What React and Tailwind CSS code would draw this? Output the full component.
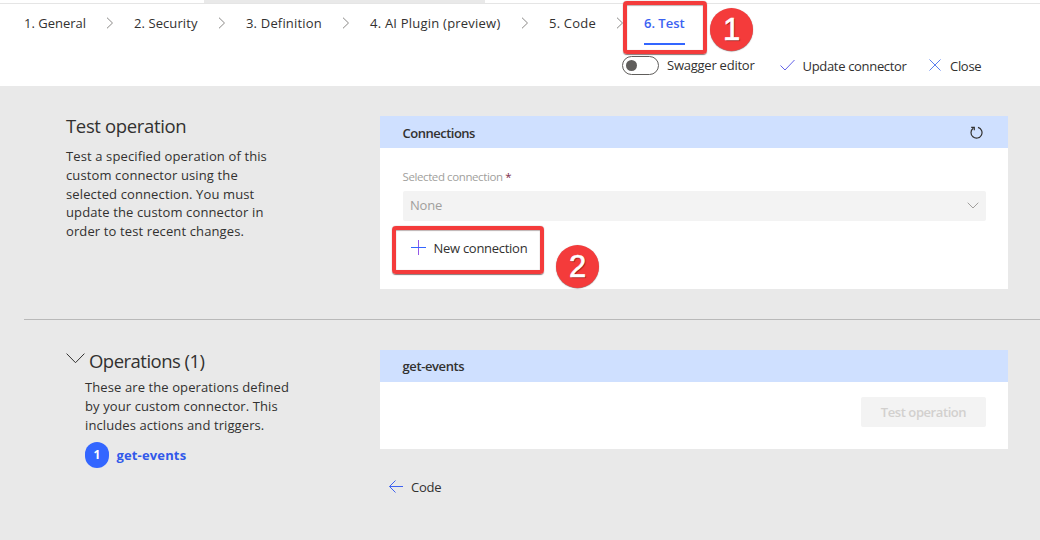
import React from "react";

const steps = [
  { label: "1. General", width: "w-[62px] tracking-[0px]" },
  { label: "2. Security", width: "w-[64px] tracking-[0.08px]" },
  { label: "3. Definition", width: "w-[76px] tracking-[0.18px]" },
  { label: "4. AI Plugin (preview)", width: "w-[131px] tracking-[0.22px]" },
  { label: "5. Code", width: "w-[47px] tracking-[0.2px]" },
];

function Glyph({ d, w, h, className = "", stroke = 1 }) {
  return (
    <svg width={w} height={h} viewBox={`0 0 ${w} ${h}`} fill="none" stroke="currentColor" strokeWidth={stroke} className={`block shrink-0 ${className}`}>
      <path d={d} />
    </svg>
  );
}

function Callout({ number, className }) {
  return (
    <div className={`absolute flex size-[43px] items-center justify-center rounded-full bg-[#f43b3b] font-['Liberation_Sans',sans-serif] text-[31px] leading-none font-normal text-white shadow-[0_0.5px_1px_0_rgba(90,60,60,0.7)] [-webkit-text-stroke:0.6px_white] [text-shadow:1px_1px_1px_rgba(80,0,0,0.6)] ${className}`}>
      {number}
    </div>
  );
}

function Highlight({ className }) {
  return <div className={`absolute rounded-[4px] border-[4px] border-[#f43b3b] shadow-[0_0.5px_1px_0_rgba(90,60,60,0.7),inset_0_0.5px_1px_0_rgba(90,60,60,0.7)] ${className}`} />;
}

export default function App() {
  return (
    <div className="relative flex h-[540px] w-[1040px] flex-col overflow-hidden bg-[#e9e9e9] font-['Open_Sans','Noto_Sans',sans-serif] text-[13px] text-[#323130]">
      <header className="flex h-[86px] shrink-0 flex-col bg-white">
        <div className="flex h-1 shrink-0 border-b border-[#e5e5e5] pl-[204px]">
          <div className="h-[3px] w-[281px] bg-[#e9e9e9]" />
        </div>
        <nav className="flex h-[42px] shrink-0 pl-6 leading-[38px]">
          {steps.map((s) => (
            <React.Fragment key={s.label}>
              <span className={`${s.width} shrink-0 whitespace-nowrap`}>{s.label}</span>
              <span className="flex w-12 shrink-0 justify-center pt-[13px]">
                <Glyph w={8} h={12} d="M1 .7 6.5 6 1 11.3" className="text-[#8a8886]" />
              </span>
            </React.Fragment>
          ))}
          <span className="h-[41px] w-[41px] shrink-0 border-b-2 border-[#3366ff] font-semibold whitespace-nowrap text-[#3b62f2]">6. Test</span>
        </nav>
        <div className="flex h-10 items-center pb-1 pl-[622px]">
          <span className="mt-[3px] flex h-[19px] w-[37px] items-center rounded-full border border-[#605e5c] pl-[3px]">
            <span className="size-[11px] rounded-full bg-[#605e5c]" />
          </span>
          <span className="mt-[3px] ml-2 w-[88px] whitespace-nowrap tracking-[-0.24px]">Swagger editor</span>
          <Glyph w={15} h={12} d="M.5 6.5 5 11 14.5 1" className="mt-[2px] ml-[25px] text-[#6262e8]" />
          <span className="mt-[5px] ml-[7.5px] w-[105.5px] whitespace-nowrap tracking-[-0.32px]">Update connector</span>
          <Glyph w={12} h={12} d="M.5.5 11.5 11.5M11.5.5.5 11.5" className="mt-[2px] ml-[21px] text-[#5d80ee]" />
          <span className="mt-[5px] ml-[9px] tracking-[-0.3px]">Close</span>
        </div>
      </header>

      <section className="flex h-[233px] shrink-0 pt-[30px] pl-[66px]">
        <div className="w-[314px] shrink-0">
          <h2 className="-mt-px text-[18.5px] leading-[22px] tracking-[-0.35px]">Test operation</h2>
          <p className="mt-[10px] leading-[18.75px] tracking-[0.12px] whitespace-nowrap">
            Test a specified operation of this<br />custom connector using the<br />selected connection. You must<br />update the custom connector in<br />order to test recent changes.
          </p>
        </div>
        <div className="h-[173px] w-[628px] bg-white">
          <div className="flex h-8 items-center justify-between bg-[#cfe0ff] pr-[25px] pl-[22.5px]">
            <span className="pt-[3px] text-[13px] font-semibold tracking-[-0.5px]">Connections</span>
            <Glyph w={13} h={13} stroke={1.2} d="M8 1.3A5.5 5.5 0 1 1 3.2 2.2M1.2 1.3H4.3V4.2" />
          </div>
          <div className="flex flex-col pt-[21px] pr-[22px] pl-[23px]">
            <div className="-ml-[0.5px] h-[22px] text-[11.5px] leading-4 text-[#a19f9d]"><span className="tracking-[-0.4px]">Selected connection </span><span className="text-[#7d2a48]">*</span></div>
            <div className="flex h-[30px] items-center justify-between rounded-[2px] bg-[#f3f3f3] pr-[7px] pl-[7px] text-[#a19f9d]">
              <span className="tracking-[-0.2px]">None</span>
              <Glyph w={12} h={7} d="M.7.7 6 6 11.3.7" className="-mt-[2px]" />
            </div>
            <div className="mt-[15px] flex h-6 items-center pl-2">
              <svg width="15" height="15" viewBox="0 0 15 15" className="mt-[-1px] block shrink-0" fill="none">
                <path d="M7.5 0V15" stroke="#9358e8" /><path d="M0 7.5H15" stroke="#3366ff" />
              </svg>
              <span className="ml-[7.5px] pt-[2px] tracking-[-0.28px] whitespace-nowrap">New connection</span>
            </div>
          </div>
        </div>
      </section>

      <section className="ml-6 flex grow border-t border-[#b9b9b9] pt-[30px] pl-[42px]">
        <div className="w-[314px] shrink-0">
          <div className="flex h-[23px]">
            <Glyph w={19} h={11} d="M.6.6 9.5 9.7 18.4.6" className="mt-[3px]" />
            <h2 className="-mt-px ml-[4px] text-[18.5px] leading-[23px] tracking-[-0.52px]">Operations (1)</h2>
          </div>
          <p className="mt-[5px] ml-[19px] leading-[19px] tracking-[0.1px] whitespace-nowrap">
            These are the operations defined<br />by your custom connector. This<br />includes actions and triggers.
          </p>
          <div className="mt-[7px] ml-[19px] flex items-center">
            <span className="flex h-[26px] w-6 items-center justify-center rounded-full bg-[#3366ff] text-[12px] font-bold text-white">1</span>
            <span className="ml-[7.5px] pt-[2px] font-bold tracking-[0.15px] text-[#3159ea]">get-events</span>
          </div>
        </div>
        <div className="w-[628px]">
          <div className="h-[99px] bg-white">
            <div className="flex h-8 items-center bg-[#cfe0ff] pt-px pl-[22.5px] font-semibold tracking-[-0.4px]">get-events</div>
            <div className="flex justify-end pt-[15px] pr-[22px]">
              <div className="flex h-[30px] w-[125px] items-center justify-center rounded-[2px] bg-[#f3f3f3] pt-px font-semibold tracking-[-0.42px] text-[#d2d0ce]">Test operation</div>
            </div>
          </div>
          <div className="mt-[27px] flex items-center pl-[8px]">
            <Glyph w={15} h={13} d="M7.5 .5 1.5 6.5 7.5 12.5M1.5 6.5H15" className="text-[#3e62f0]" />
            <span className="ml-[8px] pt-[2px] tracking-[-0.25px]">Code</span>
          </div>
        </div>
      </section>

      <Highlight className="top-[1px] left-[623px] h-[53px] w-[84px]" />
      <Callout number="1" className="top-[8px] left-[710px]" />
      <Highlight className="top-[226px] left-[392px] h-[48px] w-[152px]" />
      <Callout number="2" className="top-[245px] left-[556px]" />
    </div>
  );
}
